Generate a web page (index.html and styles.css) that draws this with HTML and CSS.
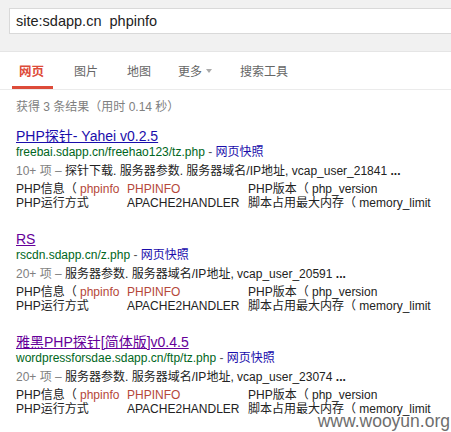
FILE: index.html
```html
<!DOCTYPE html>
<html lang="zh">
<head>
<meta charset="utf-8">
<link rel="stylesheet" href="styles.css">
</head>
<body>
<div class="top">
  <div class="searchbox">site:sdapp.cn&nbsp; phpinfo</div>
</div>
<div class="tabs">
  <span class="tab active">网页</span>
  <span class="tab t2">图片</span>
  <span class="tab t3">地图</span>
  <span class="tab t4">更多<span class="caret"></span></span>
  <span class="tab t5">搜索工具</span>
</div>
<div class="stats">获得 3 条结果（用时 0.14 秒）</div>

<div class="result">
  <a class="title">PHP探针- Yahei v0.2.5</a>
  <div class="url">freebai.sdapp.cn/freehao123/tz.php <span class="dash">-</span> <span class="cache">网页快照</span></div>
  <div class="snippet"><span class="count">10+ 项 –</span> 探针下载. 服务器参数. 服务器域名/IP地址, vcap_user_21841 <b>...</b></div>
  <div class="table">
    <span>PHP信息（ <em>phpinfo</em></span><span><em>PHPINFO</em></span><span>PHP版本（ php_version</span>
    <span>PHP运行方式</span><span>APACHE2HANDLER</span><span>脚本占用最大内存（ memory_limit</span>
  </div>
</div>

<div class="result">
  <a class="title visited">RS</a>
  <div class="url">rscdn.sdapp.cn/z.php <span class="dash">-</span> <span class="cache">网页快照</span></div>
  <div class="snippet"><span class="count">20+ 项 –</span> 服务器参数. 服务器域名/IP地址, vcap_user_20591 <b>...</b></div>
  <div class="table">
    <span>PHP信息（ <em>phpinfo</em></span><span><em>PHPINFO</em></span><span>PHP版本（ php_version</span>
    <span>PHP运行方式</span><span>APACHE2HANDLER</span><span>脚本占用最大内存（ memory_limit</span>
  </div>
</div>

<div class="result">
  <a class="title visited">雅黑PHP探针[简体版]v0.4.5</a>
  <div class="url">wordpressforsdae.sdapp.cn/ftp/tz.php <span class="dash">-</span> <span class="cache">网页快照</span></div>
  <div class="snippet"><span class="count">20+ 项 –</span> 服务器参数. 服务器域名/IP地址, vcap_user_23074 <b>...</b></div>
  <div class="table">
    <span>PHP信息（ <em>phpinfo</em></span><span><em>PHPINFO</em></span><span>PHP版本（ php_version</span>
    <span>PHP运行方式</span><span>APACHE2HANDLER</span><span>脚本占用最大内存（ memory_limit</span>
  </div>
</div>

<div class="watermark">www.wooyun.org</div>
</body>
</html>
```

FILE: styles.css
```css
html, body {
  margin: 0;
  padding: 0;
  background: #fff;
  overflow: hidden;
}
body {
  width: 451px;
  height: 432px;
  position: relative;
  font-family: "Liberation Sans", Arial, "Noto Sans CJK SC", sans-serif;
  color: #222;
}
.top {
  height: 52px;
  background: #f1f1f1;
  border-bottom: 1px solid #e5e5e5;
  padding: 8px 0 0 9px;
  box-sizing: border-box;
}
.searchbox {
  height: 26px;
  box-sizing: border-box;
  border: 1px solid #d9d9d9;
  border-right: none;
  background: #fff;
  font-size: 14.5px;
  line-height: 24px;
  padding-left: 6px;
  color: #222;
  white-space: pre;
}
.tabs {
  display: flex;
  height: 37px;
  border-bottom: 1px solid #ebebeb;
  padding-left: 12px;
  font-size: 12px;
  color: #666;
}
.tab {
  line-height: 40px;
  height: 34px;
  padding: 0 7px;
  white-space: nowrap;
}
.tab.active {
  font-size: 12.5px;
  color: #dd4b39;
  font-weight: bold;
  border-bottom: 3px solid #dd4b39;
  padding: 0 9px 0 7px;
}
.t2 { margin-left: 14px; }
.t3 { margin-left: 15px; }
.t4 { margin-left: 13px; }
.t5 { margin-left: 14px; }
.caret {
  display: inline-block;
  width: 0;
  height: 0;
  border-left: 3px solid transparent;
  border-right: 3px solid transparent;
  border-top: 4px solid #aaa;
  margin-left: 4px;
  vertical-align: 3px;
}
.stats {
  padding-left: 16px;
  margin-top: 9px;
  font-size: 12px;
  line-height: 16px;
  color: #808080;
}
.result {
  padding-left: 16px;
  margin-top: 21px;
}
.stats + .result { margin-top: 13px; }
.title {
  display: block;
  font-size: 14px;
  line-height: 17px;
  color: #1a0dab;
  text-decoration: underline;
  white-space: nowrap;
}
.title.visited { color: #609; }
.url {
  font-size: 12px;
  line-height: 15px;
  color: #006621;
  white-space: nowrap;
}
.url .dash { color: #555; }
.url .cache { color: #1a0dab; }
.snippet {
  margin-top: 3px;
  font-size: 12px;
  line-height: 16px;
  color: #222;
  white-space: nowrap;
}
.snippet .count { color: #808080; }
.table {
  margin-top: 3px;
  display: grid;
  grid-template-columns: 111px 121px auto;
  font-size: 12px;
  line-height: 14px;
  white-space: nowrap;
}
.table em {
  font-style: normal;
  color: #b5483a;
}
.watermark {
  position: absolute;
  right: 1px;
  bottom: 2px;
  font-size: 17.5px;
  line-height: 18px;
  color: #6e6e6e;
}
```
